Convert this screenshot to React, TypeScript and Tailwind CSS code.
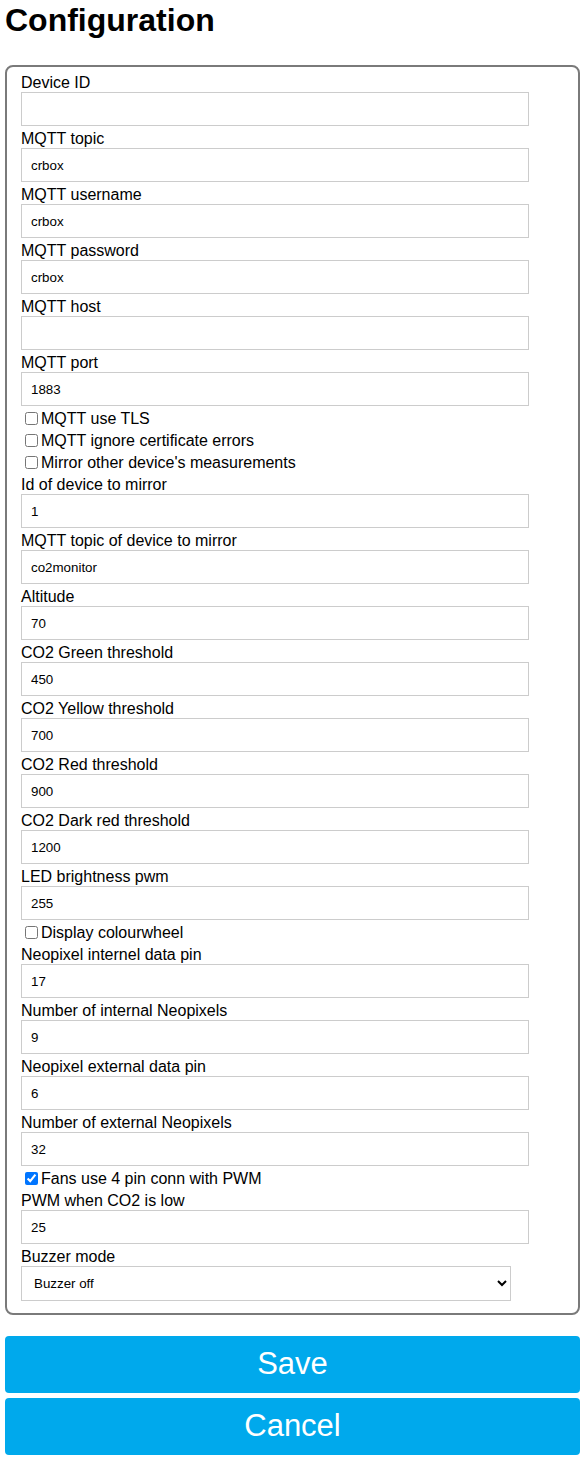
import React from "react";

type Row =
  | { kind: "text"; label: string; value: string }
  | { kind: "check"; label: string; checked?: boolean };

const rows: Row[] = [
  { kind: "text", label: "Device ID", value: "" },
  { kind: "text", label: "MQTT topic", value: "crbox" },
  { kind: "text", label: "MQTT username", value: "crbox" },
  { kind: "text", label: "MQTT password", value: "crbox" },
  { kind: "text", label: "MQTT host", value: "" },
  { kind: "text", label: "MQTT port", value: "1883" },
  { kind: "check", label: "MQTT use TLS" },
  { kind: "check", label: "MQTT ignore certificate errors" },
  { kind: "check", label: "Mirror other device's measurements" },
  { kind: "text", label: "Id of device to mirror", value: "1" },
  { kind: "text", label: "MQTT topic of device to mirror", value: "co2monitor" },
  { kind: "text", label: "Altitude", value: "70" },
  { kind: "text", label: "CO2 Green threshold", value: "450" },
  { kind: "text", label: "CO2 Yellow threshold", value: "700" },
  { kind: "text", label: "CO2 Red threshold", value: "900" },
  { kind: "text", label: "CO2 Dark red threshold", value: "1200" },
  { kind: "text", label: "LED brightness pwm", value: "255" },
  { kind: "check", label: "Display colourwheel" },
  { kind: "text", label: "Neopixel internel data pin", value: "17" },
  { kind: "text", label: "Number of internal Neopixels", value: "9" },
  { kind: "text", label: "Neopixel external data pin", value: "6" },
  { kind: "text", label: "Number of external Neopixels", value: "32" },
  { kind: "check", label: "Fans use 4 pin conn with PWM", checked: true },
  { kind: "text", label: "PWM when CO2 is low", value: "25" },
];

export default function App() {
  return (
    <div
      className="px-[5px] pb-[4px] bg-white text-black"
      style={{ fontFamily: '"Liberation Sans", Arial, sans-serif' }}
    >
      <h1 className="text-[32px] font-bold leading-[37px] pt-[2px] mb-[26px]">
        Configuration
      </h1>
      <div className="border-2 border-[#7a7a7a] rounded-[8px] pl-[14px] pt-[6px] pb-[12px]">
        {rows.map((r, i) =>
          r.kind === "text" ? (
            <div key={i}>
              <label className="block text-[16px] leading-[19px]">{r.label}</label>
              <input
                type="text"
                defaultValue={r.value}
                className="block w-[508px] h-[34px] mb-[3px] border border-[#cccccc] px-[9px] text-[13.33px] text-black outline-none"
                style={{ fontFamily: '"Liberation Sans", Arial, sans-serif' }}
              />
            </div>
          ) : (
            <label key={i} className="flex items-center h-[22px] text-[16px] leading-[19px] pb-[3px]">
              <input
                type="checkbox"
                defaultChecked={r.checked}
                className="w-[13px] h-[13px] ml-[4px] mr-[3px] m-0"
              />
              <span>{r.label}</span>
            </label>
          )
        )}
        <label className="block text-[16px] leading-[19px]">Buzzer mode</label>
        <select
          defaultValue="off"
          className="block w-[490px] h-[35px] border border-[#cccccc] pl-[8px] pr-[6px] text-[13.33px] text-black bg-white"
          style={{ fontFamily: '"Liberation Sans", Arial, sans-serif' }}
        >
          <option value="off">Buzzer off</option>
          <option value="on">Buzzer on</option>
        </select>
      </div>
      <div className="mt-[21px] flex flex-col gap-[5px]">
        <button className="h-[57px] w-full rounded-[4px] bg-[#00a9ec] text-white text-[31px]">
          Save
        </button>
        <button className="h-[57px] w-full rounded-[4px] bg-[#00a9ec] text-white text-[31px]">
          Cancel
        </button>
      </div>
    </div>
  );
}
